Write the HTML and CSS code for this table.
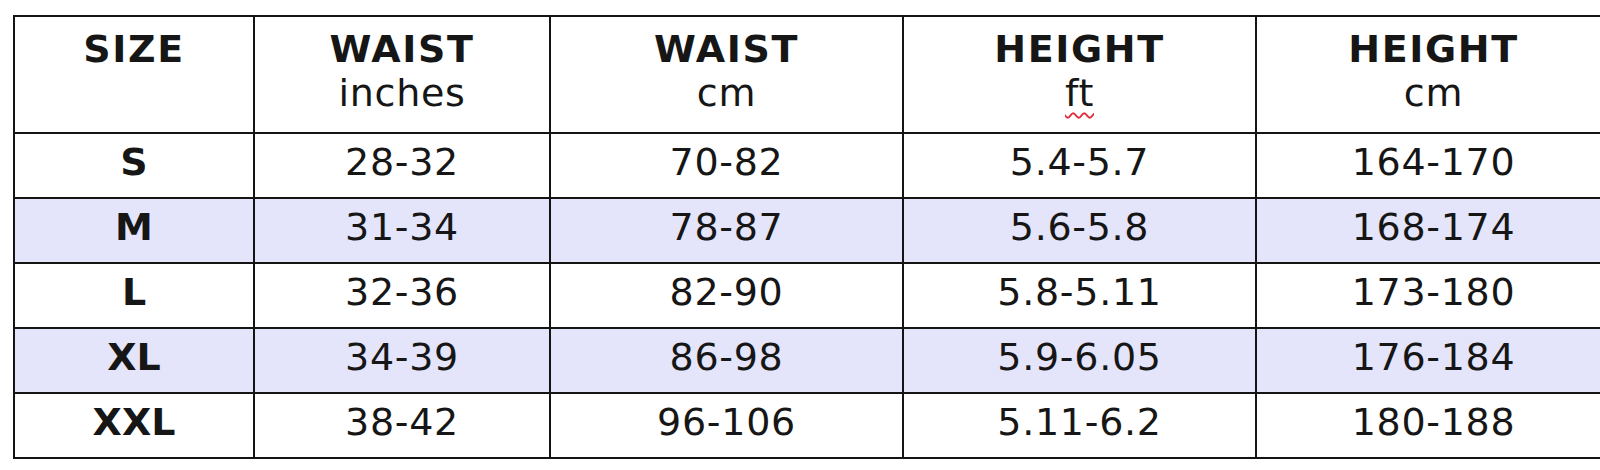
FILE: index.html
```html
<!DOCTYPE html>
<html lang="en">
<head>
<meta charset="utf-8">
<title>Size chart</title>
<link rel="stylesheet" href="styles.css">
</head>
<body>
<div class="wrap">
  <table class="chart">
    <colgroup>
      <col class="c-size">
      <col class="c-wi">
      <col class="c-wc">
      <col class="c-hf">
      <col class="c-hc">
    </colgroup>
    <thead>
      <tr class="head">
        <th>SIZE</th>
        <th>WAIST<span class="unit">inches</span></th>
        <th>WAIST<span class="unit">cm</span></th>
        <th>HEIGHT<span class="unit"><span class="spell">ft</span></span></th>
        <th>HEIGHT<span class="unit">cm</span></th>
      </tr>
    </thead>
    <tbody>
      <tr>
        <td class="sz">S</td><td>28-32</td><td>70-82</td><td>5.4-5.7</td><td>164-170</td>
      </tr>
      <tr class="alt">
        <td class="sz">M</td><td>31-34</td><td>78-87</td><td>5.6-5.8</td><td>168-174</td>
      </tr>
      <tr>
        <td class="sz">L</td><td>32-36</td><td>82-90</td><td>5.8-5.11</td><td>173-180</td>
      </tr>
      <tr class="alt">
        <td class="sz">XL</td><td>34-39</td><td>86-98</td><td>5.9-6.05</td><td>176-184</td>
      </tr>
      <tr>
        <td class="sz">XXL</td><td>38-42</td><td>96-106</td><td>5.11-6.2</td><td>180-188</td>
      </tr>
    </tbody>
  </table>
</div>
</body>
</html>
```

FILE: styles.css
```css
html, body {
  margin: 0;
  padding: 0;
  background: #ffffff;
}

.wrap {
  padding: 15px 0 0 13px;
  width: 1700px;
}

.chart {
  border-collapse: collapse;
  table-layout: fixed;
  width: 1597px;
  font-family: "DejaVu Sans", Verdana, sans-serif;
  font-size: 38px;
  color: #161616;
}

.c-size { width: 240px; }
.c-wi { width: 296px; }
.c-wc { width: 353px; }
.c-hf { width: 353px; }
.c-hc { width: 355px; }

.chart th,
.chart td {
  border: 2px solid #141414;
  text-align: center;
  padding: 0;
  letter-spacing: 0.7px;
}

.head th {
  height: 117px;
  vertical-align: top;
  padding-top: 10px;
  font-weight: bold;
  letter-spacing: 1.6px;
  box-sizing: border-box;
}

.unit {
  display: block;
  font-weight: normal;
  letter-spacing: 0.7px;
}

.spell {
  text-decoration: underline wavy #e0303c;
  text-decoration-thickness: 1.5px;
  text-underline-offset: 6px;
}

.chart td {
  height: 56px;
  padding: 0 0 7px;
  vertical-align: middle;
}

.chart td.sz {
  font-weight: bold;
  letter-spacing: 0;
}

.alt td {
  background: #e4e4fa;
}
```
